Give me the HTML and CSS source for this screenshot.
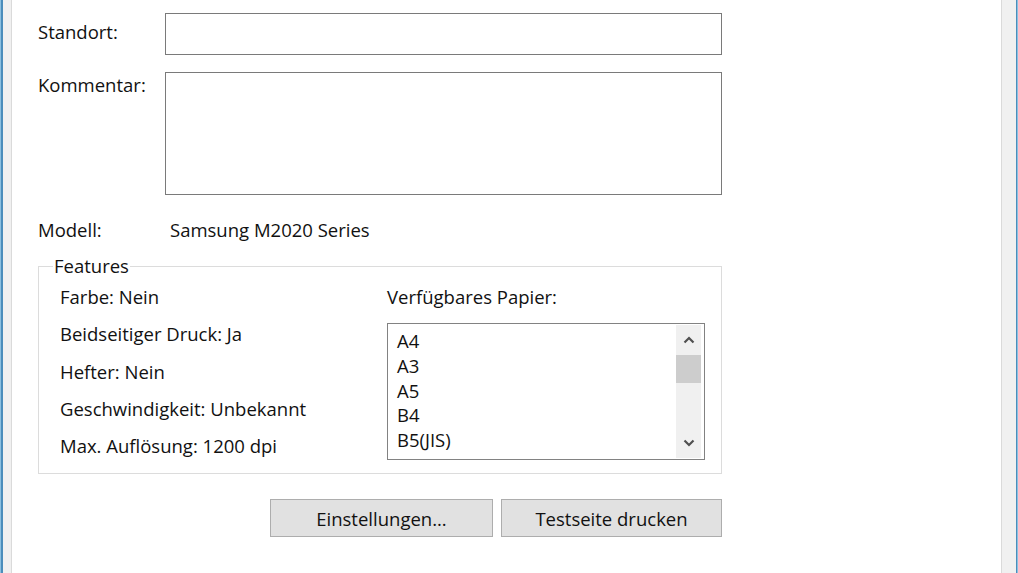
FILE: index.html
```html
<!DOCTYPE html>
<html lang="de">
<head>
  <meta charset="UTF-8"/>
  <title>Eigenschaften von Samsung M2020 Series</title>
  <link rel="stylesheet" href="styles.css">
</head>
<body>
<div class="window">
  <div class="tab-frame">
    <div class="tab-page">
      <div class="form-row">
        <label class="label" for="standort">Standort:</label>
        <input type="text" id="standort" class="field" />
      </div>
      <div class="form-row">
        <label class="label" for="kommentar">Kommentar:</label>
        <textarea id="kommentar" class="field memo"></textarea>
      </div>
      <div class="model-row">
        <span class="label">Modell:</span>
        <span class="model-name">Samsung M2020 Series</span>
      </div>
      <fieldset class="features">
        <legend>Features</legend>
        <div class="feature-list">
          <div>Farbe: Nein</div>
          <div>Beidseitiger Druck: Ja</div>
          <div>Hefter: Nein</div>
          <div>Geschwindigkeit: Unbekannt</div>
          <div>Max. Auflösung: 1200 dpi</div>
        </div>
        <div class="paper">
          <div class="paper-title">Verfügbares Papier:</div>
          <div class="listbox">
            <div class="list-items">
              <div>A4</div>
              <div>A3</div>
              <div>A5</div>
              <div>B4</div>
              <div>B5(JIS)</div>
            </div>
            <div class="scrollbar">
              <div class="arrow">
                <svg width="12" height="8" viewBox="0 0 12 8"><path d="M1.5 6.5 L6 2 L10.5 6.5" fill="none" stroke="#505050" stroke-width="2.2"/></svg>
              </div>
              <div class="track"><div class="thumb"></div></div>
              <div class="arrow">
                <svg width="12" height="8" viewBox="0 0 12 8"><path d="M1.5 1.5 L6 6 L10.5 1.5" fill="none" stroke="#505050" stroke-width="2.2"/></svg>
              </div>
            </div>
          </div>
        </div>
      </fieldset>
      <div class="buttons">
        <button type="button" class="btn btn-settings">Einstellungen...</button>
        <button type="button" class="btn btn-test">Testseite drucken</button>
      </div>
    </div>
  </div>
</div>
</body>
</html>
```

FILE: styles.css
```css
html, body { margin:0; padding:0; background:#fff; }
body { font-family: "Open Sans", "Noto Sans", sans-serif; font-size:18.5px; color:#111; }

.window { height:573px; border-left:1px solid #8cc0e0; border-right:1px solid #8cc0e0; box-sizing:border-box; }
.tab-frame { height:100%; background:#f0f0f0; border-left:2px solid #4b8dbb; border-right:1px solid #4b8dbb; padding:0 14px 0 8px; box-sizing:border-box; }
.tab-page { height:100%; background:#fff; border-left:1px solid #dadada; border-right:1px solid #dadada; padding:13px 0 0 26px; box-sizing:border-box; }

.form-row { display:flex; margin-bottom:17px; width:684px; }
.label { width:127px; flex:none; line-height:22px; padding-top:8px; }
.form-row:nth-child(2) .label { padding-top:2px; }
.field { width:557px; height:42px; box-sizing:border-box; border:1px solid #7a7a7a; margin:0; font:inherit; padding:4px 6px; background:#fff; }
.memo { height:123px; resize:none; }

.model-row { display:flex; margin-top:24px; line-height:22px; }
.model-row .label { padding-top:0; }
.model-name { padding-left:5px; }

.features { width:684px; box-sizing:border-box; margin:14px 0 0 0; border:1px solid #dcdcdc; padding:9px 16px 13px 21px; display:flex; min-width:0; }
.features legend { padding:0 1px; margin-left:-7px; line-height:22px; }
.feature-list { width:327px; display:flex; flex-direction:column; gap:15.25px; line-height:22px; }
.paper-title { line-height:22px; margin-bottom:15px; }

.listbox { width:318px; height:137px; box-sizing:border-box; border:1px solid #828282; display:flex; padding:1px 3px 1px 0; }
.list-items { flex:1; padding:4px 0 0 9px; line-height:24.75px; }
.scrollbar { width:25px; background:#f0f0f0; display:flex; flex-direction:column; }
.arrow { height:30px; display:flex; align-items:center; justify-content:center; }
.track { flex:1; }
.thumb { height:28px; background:#cdcdcd; }

.buttons { display:flex; justify-content:flex-end; gap:8px; width:684px; margin-top:25px; }
.btn { height:38px; background:#e1e1e1; border:1px solid #adadad; font:inherit; color:#111; padding:0; }
.btn-settings { width:223px; }
.btn-test { width:221px; }
```
